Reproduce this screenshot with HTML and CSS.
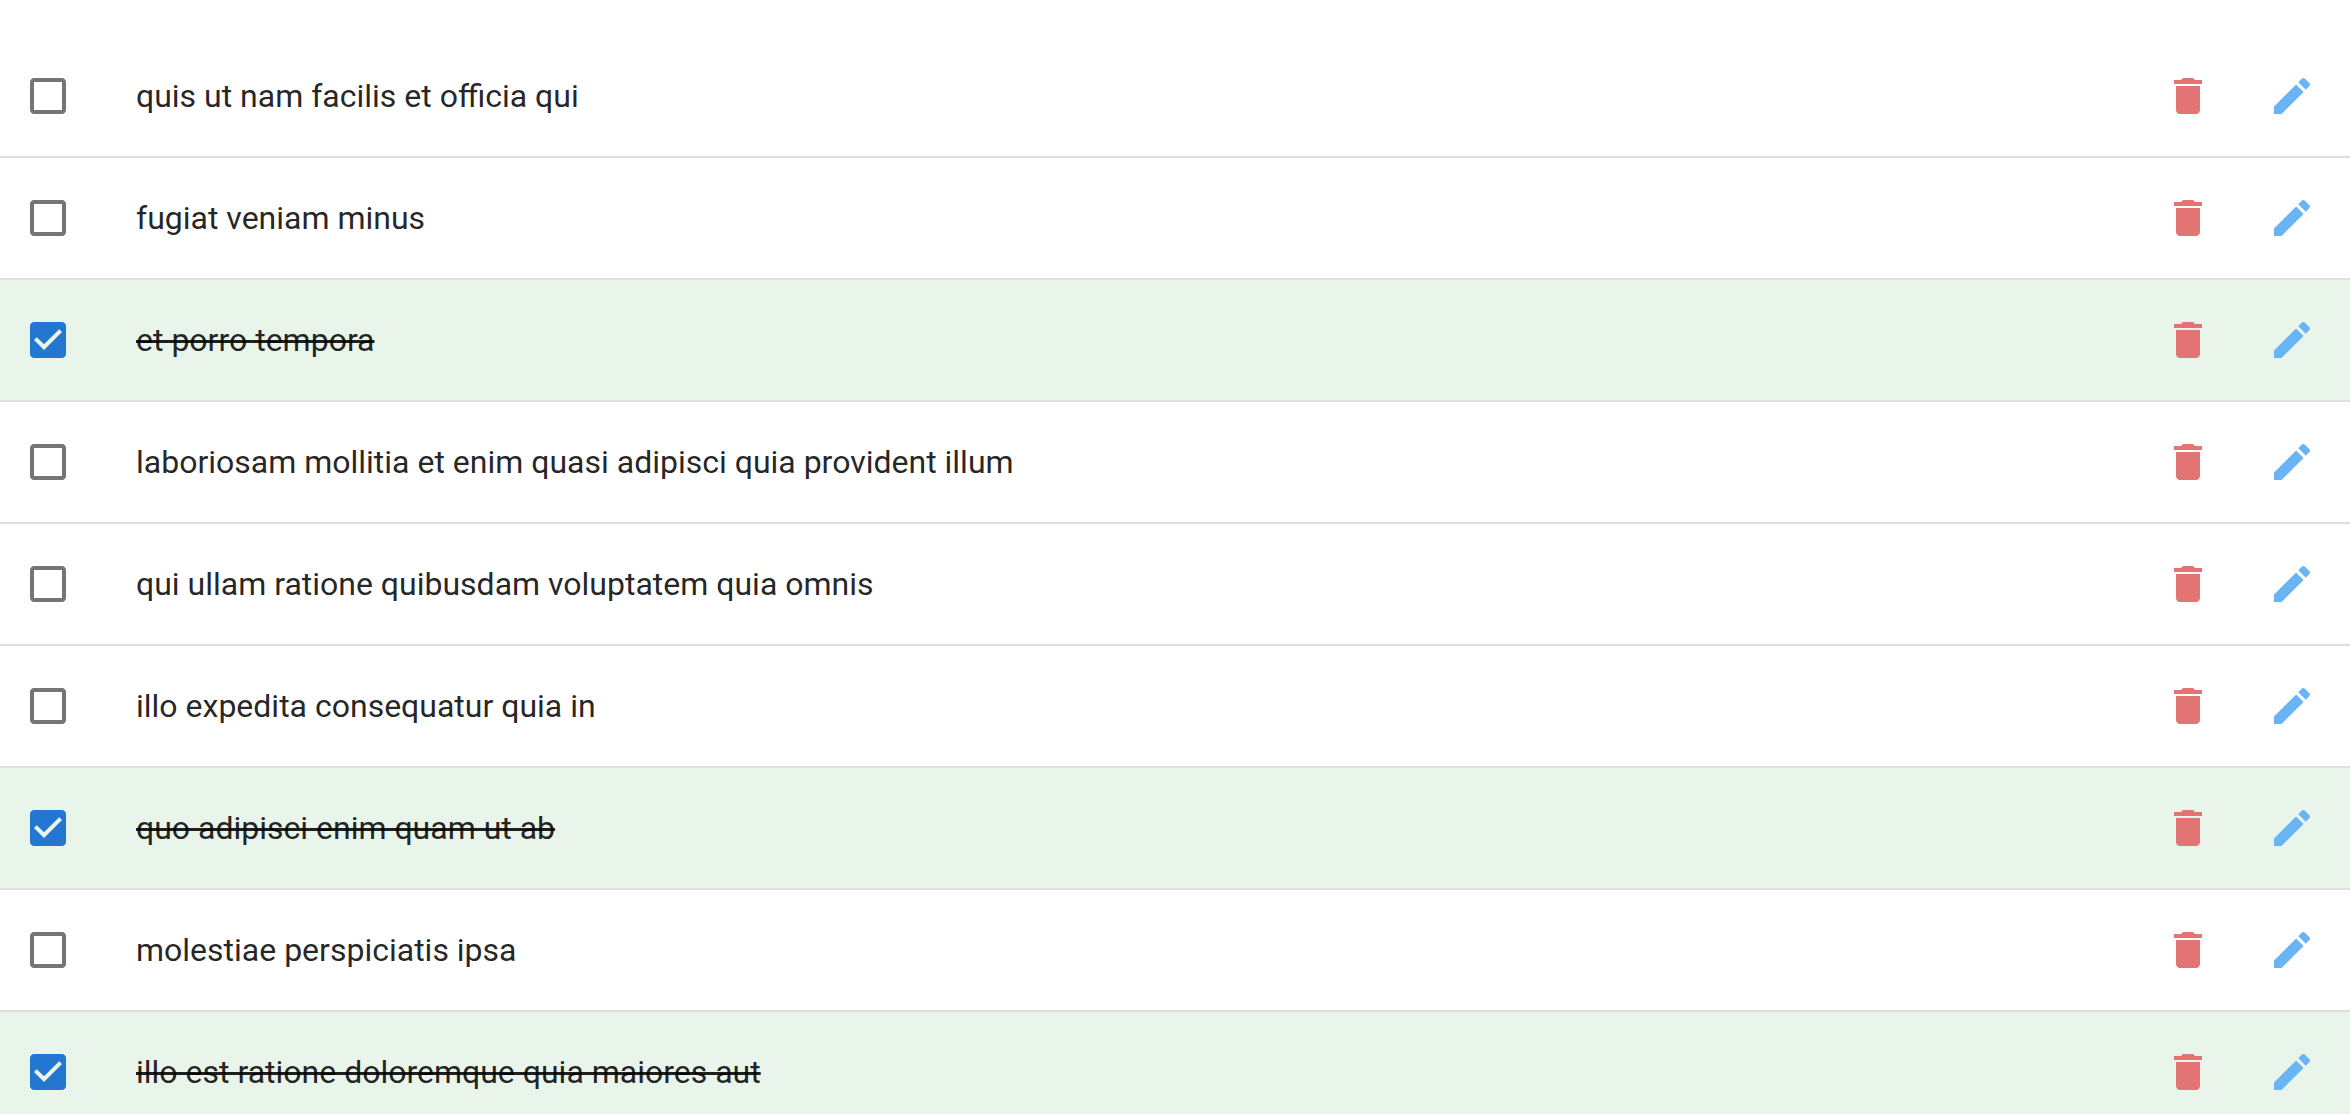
FILE: index.html
```
<!DOCTYPE html>
<html lang="la">
<head>
<meta charset="utf-8">
<meta name="viewport" content="width=device-width, initial-scale=1">
<title>Todos</title>
<link rel="stylesheet" href="styles.css">
</head>
<body>
<svg class="sprite" aria-hidden="true">
  <symbol id="box" viewBox="0 0 24 24"><path d="M19 5v14H5V5h14m0-2H5c-1.100 0-2 .9-2 2v14c0 1.100.9 2 2 2h14c1.100 0 2-.9 2-2V5c0-1.100-.9-2-2-2z"/></symbol>
  <symbol id="box-checked" viewBox="0 0 24 24"><path d="M19 3H5c-1.110 0-2 .9-2 2v14c0 1.100.89 2 2 2h14c1.110 0 2-.9 2-2V5c0-1.100-.89-2-2-2zm-9 14l-5-5 1.410-1.410L10 14.170l7.590-7.590L19 8l-9 9z"/></symbol>
  <symbol id="delete" viewBox="0 0 24 24"><path d="M6 19c0 1.100.9 2 2 2h8c1.100 0 2-.9 2-2V7H6v12zM19 4h-3.500l-1-1h-5l-1 1H5v2h14V4z"/></symbol>
  <symbol id="edit" viewBox="0 0 24 24"><path d="M3 17.250V21h3.750L17.810 9.940l-3.750-3.750L3 17.250zM20.710 7.040c.39-.39.39-1.020 0-1.410l-2.340-2.340c-.39-.39-1.020-.39-1.410 0l-1.830 1.830 3.750 3.750 1.830-1.830z"/></symbol>
</svg>
<main>
<ul class="todos">
  <li class="todo">
    <span class="check"><input type="checkbox" id="t1"><svg class="icon off"><use href="#box"/></svg><svg class="icon on"><use href="#box-checked"/></svg></span>
    <label class="title" for="t1"><span>quis ut nam facilis et officia qui</span></label>
    <button class="action delete" type="button" aria-label="Delete"><svg class="icon"><use href="#delete"/></svg></button>
    <button class="action edit" type="button" aria-label="Edit"><svg class="icon"><use href="#edit"/></svg></button>
  </li>
  <li class="todo">
    <span class="check"><input type="checkbox" id="t2"><svg class="icon off"><use href="#box"/></svg><svg class="icon on"><use href="#box-checked"/></svg></span>
    <label class="title" for="t2"><span>fugiat veniam minus</span></label>
    <button class="action delete" type="button" aria-label="Delete"><svg class="icon"><use href="#delete"/></svg></button>
    <button class="action edit" type="button" aria-label="Edit"><svg class="icon"><use href="#edit"/></svg></button>
  </li>
  <li class="todo done">
    <span class="check"><input type="checkbox" id="t3" checked><svg class="icon off"><use href="#box"/></svg><svg class="icon on"><use href="#box-checked"/></svg></span>
    <label class="title" for="t3"><span>et porro tempora</span></label>
    <button class="action delete" type="button" aria-label="Delete"><svg class="icon"><use href="#delete"/></svg></button>
    <button class="action edit" type="button" aria-label="Edit"><svg class="icon"><use href="#edit"/></svg></button>
  </li>
  <li class="todo">
    <span class="check"><input type="checkbox" id="t4"><svg class="icon off"><use href="#box"/></svg><svg class="icon on"><use href="#box-checked"/></svg></span>
    <label class="title" for="t4"><span>laboriosam mollitia et enim quasi adipisci quia provident illum</span></label>
    <button class="action delete" type="button" aria-label="Delete"><svg class="icon"><use href="#delete"/></svg></button>
    <button class="action edit" type="button" aria-label="Edit"><svg class="icon"><use href="#edit"/></svg></button>
  </li>
  <li class="todo">
    <span class="check"><input type="checkbox" id="t5"><svg class="icon off"><use href="#box"/></svg><svg class="icon on"><use href="#box-checked"/></svg></span>
    <label class="title" for="t5"><span>qui ullam ratione quibusdam voluptatem quia omnis</span></label>
    <button class="action delete" type="button" aria-label="Delete"><svg class="icon"><use href="#delete"/></svg></button>
    <button class="action edit" type="button" aria-label="Edit"><svg class="icon"><use href="#edit"/></svg></button>
  </li>
  <li class="todo">
    <span class="check"><input type="checkbox" id="t6"><svg class="icon off"><use href="#box"/></svg><svg class="icon on"><use href="#box-checked"/></svg></span>
    <label class="title" for="t6"><span>illo expedita consequatur quia in</span></label>
    <button class="action delete" type="button" aria-label="Delete"><svg class="icon"><use href="#delete"/></svg></button>
    <button class="action edit" type="button" aria-label="Edit"><svg class="icon"><use href="#edit"/></svg></button>
  </li>
  <li class="todo done">
    <span class="check"><input type="checkbox" id="t7" checked><svg class="icon off"><use href="#box"/></svg><svg class="icon on"><use href="#box-checked"/></svg></span>
    <label class="title" for="t7"><span>quo adipisci enim quam ut ab</span></label>
    <button class="action delete" type="button" aria-label="Delete"><svg class="icon"><use href="#delete"/></svg></button>
    <button class="action edit" type="button" aria-label="Edit"><svg class="icon"><use href="#edit"/></svg></button>
  </li>
  <li class="todo">
    <span class="check"><input type="checkbox" id="t8"><svg class="icon off"><use href="#box"/></svg><svg class="icon on"><use href="#box-checked"/></svg></span>
    <label class="title" for="t8"><span>molestiae perspiciatis ipsa</span></label>
    <button class="action delete" type="button" aria-label="Delete"><svg class="icon"><use href="#delete"/></svg></button>
    <button class="action edit" type="button" aria-label="Edit"><svg class="icon"><use href="#edit"/></svg></button>
  </li>
  <li class="todo done">
    <span class="check"><input type="checkbox" id="t9" checked><svg class="icon off"><use href="#box"/></svg><svg class="icon on"><use href="#box-checked"/></svg></span>
    <label class="title" for="t9"><span>illo est ratione doloremque quia maiores aut</span></label>
    <button class="action delete" type="button" aria-label="Delete"><svg class="icon"><use href="#delete"/></svg></button>
    <button class="action edit" type="button" aria-label="Edit"><svg class="icon"><use href="#edit"/></svg></button>
  </li>
</ul>
</main>
</body>
</html>
```
FILE: styles.css
```
* {
  box-sizing: border-box;
}

html {
  scrollbar-width: none;
}

body {
  margin: 0;
  background: #fff;
  color: rgba(0, 0, 0, 0.87);
  font-family: Roboto, "Liberation Sans", sans-serif;
  font-size: 32px;
  line-height: 48px;
}

.sprite {
  display: none;
}

.todos {
  margin: 0;
  padding: 36px 0 0;
  list-style: none;
}

.todo {
  display: flex;
  align-items: center;
  padding: 12px 10px 12px 24px;
  border-bottom: 2px solid #dfdfdf;
}

.done {
  background: #e9f4ea;
}

.icon {
  display: block;
  width: 48px;
  height: 48px;
  fill: currentColor;
}

.check {
  display: grid;
  flex: none;
  color: #757575;
}

.check > * {
  grid-area: 1 / 1;
}

.check input {
  width: 48px;
  height: 48px;
  margin: 0;
  opacity: 0;
}

.check svg {
  pointer-events: none;
}

.check .on,
.check input:checked ~ .off {
  display: none;
}

.check input:checked ~ .on {
  display: block;
  color: #2477d1;
}

.title {
  flex: 1;
  min-width: 0;
  padding-left: 64px;
}

.done .title span {
  text-decoration: line-through;
  text-decoration-thickness: 3px;
}

.action {
  flex: none;
  padding: 24px;
  border: 0;
  border-radius: 50%;
  background: none;
  cursor: pointer;
}

.delete {
  margin-right: 8px;
  color: #e27474;
}

.edit {
  color: #69b4f5;
}
```
